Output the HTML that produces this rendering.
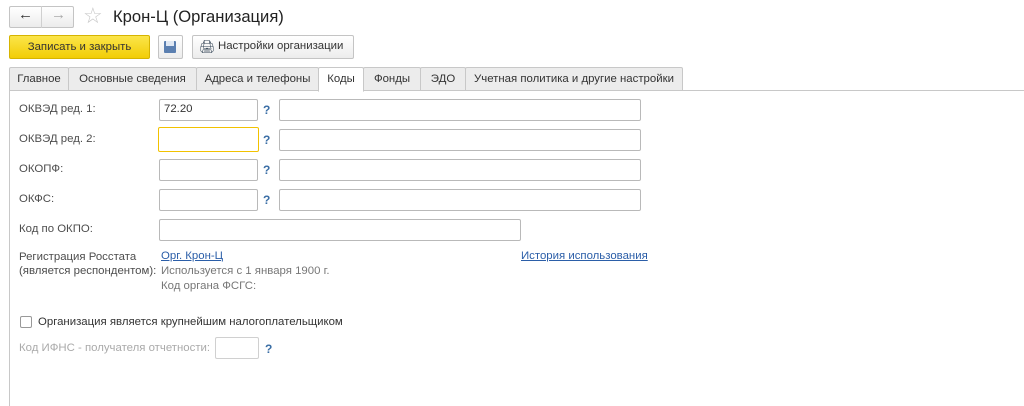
<!DOCTYPE html>
<html><head><meta charset="utf-8"><style>
*{box-sizing:border-box;margin:0;padding:0}
body{width:1024px;height:406px;background:#fff;font-family:"Liberation Sans",Arial,sans-serif;font-size:11.4px;color:#333;position:relative;overflow:hidden}
.a{position:absolute}
.box{position:absolute;border:1px solid #b9b9b9;border-radius:2px;background:#fff;height:22px}
.q{position:absolute;color:#3a6ea5;font-weight:bold;font-size:12px}
.lbl{position:absolute;left:19px;color:#4d4d4d}
.tab{position:absolute;top:67px;height:24px;border:1px solid #c8c8c8;background:#ececec;color:#333;line-height:22px;text-align:center;border-radius:2px 2px 0 0}
.btn{position:absolute;border:1px solid #c4c4c4;border-radius:2px;background:linear-gradient(#fff,#ececec);height:23px}
</style></head><body>
<div class="btn" style="left:9px;top:6px;width:65px;height:22px"></div>
<div class="a" style="left:41px;top:6px;width:1px;height:22px;background:#d0d0d0"></div>
<div class="a" style="left:18px;top:6px;font-size:15px;color:#333">&#8592;</div>
<div class="a" style="left:51px;top:6px;font-size:15px;color:#aaa">&#8594;</div>
<div class="a" style="left:83px;top:3px;font-size:22px;color:#c8c8c8">&#9734;</div>
<div class="a" style="left:113px;top:7px;font-size:16.6px;color:#222">Крон-Ц (Организация)</div>
<div class="a" style="left:9px;top:35px;width:141px;height:24px;background:linear-gradient(#fbe54a,#f2cd06);border:1px solid #d6b400;border-radius:2px;line-height:22px;text-align:center;color:#333">Записать и закрыть</div>
<div class="btn" style="left:158px;top:35px;width:25px;height:24px"></div>
<div class="a" style="left:164px;top:41px;width:12px;height:12px;background:#5b7fb0;border-radius:1px"></div>
<div class="a" style="left:166px;top:41px;width:8px;height:5px;background:#e0e8f3"></div>
<div class="btn" style="left:192px;top:35px;width:162px;height:24px"></div>
<div class="a" style="left:199px;top:39px;font-size:13px;color:#345">&#128424;</div>
<div class="a" style="left:218px;top:40px;color:#333">Настройки организации</div>
<div class="a" style="left:9px;top:90px;width:1015px;height:1px;background:#c8c8c8"></div>
<div class="a" style="left:9px;top:90px;width:1px;height:316px;background:#c8c8c8"></div>
<div class="tab" style="left:9px;width:60px">Главное</div>
<div class="tab" style="left:68px;width:129px">Основные сведения</div>
<div class="tab" style="left:196px;width:123px">Адреса и телефоны</div>
<div class="tab" style="left:318px;width:46px;background:#fff;border-bottom-color:#fff;height:25px">Коды</div>
<div class="tab" style="left:363px;width:58px">Фонды</div>
<div class="tab" style="left:420px;width:46px">ЭДО</div>
<div class="tab" style="left:465px;width:218px">Учетная политика и другие настройки</div>

<div class="lbl" style="top:103px">ОКВЭД ред. 1:</div>
<div class="box" style="left:159px;top:99px;width:99px;padding:3px 4px;color:#333">72.20</div>
<div class="q" style="left:263px;top:103px">?</div>
<div class="box" style="left:279px;top:99px;width:362px"></div>

<div class="lbl" style="top:133px">ОКВЭД ред. 2:</div>
<div class="box" style="left:158px;top:127px;width:101px;height:25px;border:1px solid #f2c200"></div>
<div class="q" style="left:263px;top:133px">?</div>
<div class="box" style="left:279px;top:129px;width:362px"></div>

<div class="lbl" style="top:163px">ОКОПФ:</div>
<div class="box" style="left:159px;top:159px;width:99px"></div>
<div class="q" style="left:263px;top:163px">?</div>
<div class="box" style="left:279px;top:159px;width:362px"></div>

<div class="lbl" style="top:193px">ОКФС:</div>
<div class="box" style="left:159px;top:189px;width:99px"></div>
<div class="q" style="left:263px;top:193px">?</div>
<div class="box" style="left:279px;top:189px;width:362px"></div>

<div class="lbl" style="top:223px">Код по ОКПО:</div>
<div class="box" style="left:159px;top:219px;width:362px"></div>

<div class="lbl" style="top:250px;line-height:14px">Регистрация Росстата<br>(является респондентом):</div>
<div class="a" style="left:161px;top:250px;color:#2b5ea8;text-decoration:underline">Орг. Крон-Ц</div>
<div class="a" style="left:161px;top:264px;color:#777;line-height:15px">Используется с 1 января 1900 г.<br>Код органа ФСГС:</div>
<div class="a" style="left:521px;top:250px;color:#2b5ea8;text-decoration:underline">История использования</div>

<div class="a" style="left:20px;top:316px;width:12px;height:12px;border:1px solid #999;border-radius:2px;background:#fff"></div>
<div class="a" style="left:38px;top:316px;color:#333">Организация является крупнейшим налогоплательщиком</div>
<div class="a" style="left:19px;top:342px;color:#aaa">Код ИФНС - получателя отчетности:</div>
<div class="box" style="left:215px;top:337px;width:44px;border-color:#d0d0d0"></div>
<div class="q" style="left:265px;top:342px">?</div>
</body></html>
